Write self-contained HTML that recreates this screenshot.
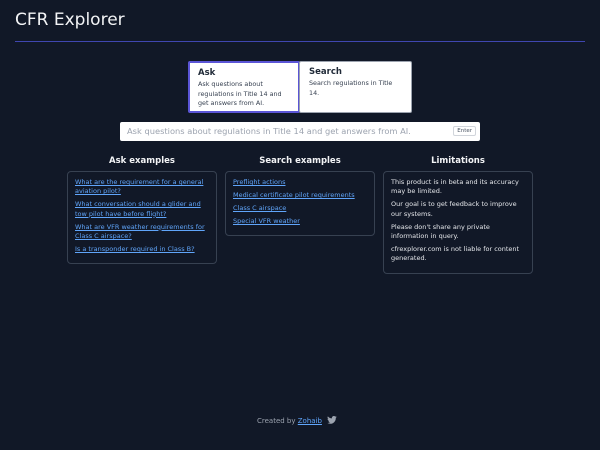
<!DOCTYPE html>
<html><head><style>
*{box-sizing:border-box;margin:0;padding:0}
body{width:600px;height:450px;background:#111827;font-family:"DejaVu Sans","Liberation Sans",sans-serif;color:#e5e7eb;position:relative;overflow:hidden}
h1{position:absolute;left:15px;top:10px;font-size:17px;font-weight:400;color:#f3f4f6}
.hr{position:absolute;left:15px;top:41px;width:570px;height:1px;background:#3f46b0}
.card{position:absolute;top:61px;height:52px;background:#fff;border-radius:2px;padding:5px 8px;color:#374151}
.card b{display:block;font-size:8.5px;color:#1f2937;margin-bottom:2px}
.card p{font-size:6.4px;line-height:9.5px}
.inp{position:absolute;left:120px;top:122px;width:360px;height:19px;background:#fff;border-radius:2px;font-size:8.3px;color:#9ca3af;padding:3.5px 7px}
.enter{position:absolute;right:4px;top:4px;border:1px solid #d1d5db;border-radius:2px;font-size:5.5px;color:#4b5563;padding:1px 3px}
h2{position:absolute;top:156px;font-size:8.5px;font-weight:700;color:#f3f4f6;text-align:center;width:150px}
.box{position:absolute;top:171px;width:150px;border:1px solid #374151;border-radius:4px;padding:6px 6px 3px 7px;font-size:6.5px;line-height:9.3px}
.box a{display:block;color:#60a5fa;text-decoration:underline;margin-bottom:3.8px}
.box p{color:#e5e7eb;margin-bottom:3.8px}
.foot{position:absolute;top:416px;left:257px;font-size:7px;color:#9ca3af}
.foot a{color:#60a5fa;text-decoration:underline}
</style></head><body>
<h1>CFR Explorer</h1>
<div class="hr"></div>
<div class="card" style="left:188px;width:112px;border:2px solid #5b55d6"><b>Ask</b><p>Ask questions about regulations in Title 14 and get answers from AI.</p></div>
<div class="card" style="left:299px;width:113px;border:1px solid #9ca3af;padding-left:9px"><b>Search</b><p>Search regulations in Title 14.</p></div>
<div class="inp">Ask questions about regulations in Title 14 and get answers from AI.<span class="enter">Enter</span></div>
<h2 style="left:67px">Ask examples</h2>
<h2 style="left:225px">Search examples</h2>
<h2 style="left:383px">Limitations</h2>
<div class="box" style="left:67px;height:93px"><a>What are the requirement for a general aviation pilot?</a><a>What conversation should a glider and tow pilot have before flight?</a><a>What are VFR weather requirements for Class C airspace?</a><a>Is a transponder required in Class B?</a></div>
<div class="box" style="left:225px;height:65px"><a>Preflight actions</a><a>Medical certificate pilot requirements</a><a>Class C airspace</a><a>Special VFR weather</a></div>
<div class="box" style="left:383px;height:103px"><p>This product is in beta and its accuracy may be limited.</p><p>Our goal is to get feedback to improve our systems.</p><p>Please don't share any private information in query.</p><p>cfrexplorer.com is not liable for content generated.</p></div>
<div class="foot">Created by <a>Zohaib</a> <svg width="10" height="8" viewBox="0 0 24 20" style="vertical-align:-1px;margin-left:3px"><path fill="#9ca3af" d="M24 2.4a10 10 0 0 1-2.8.8A5 5 0 0 0 23.3.4a10 10 0 0 1-3.1 1.2A4.9 4.9 0 0 0 11.8 6 14 14 0 0 1 1.7.9a4.9 4.9 0 0 0 1.5 6.6A5 5 0 0 1 1 6.9a4.9 4.9 0 0 0 3.9 4.9 5 5 0 0 1-2.2.1 4.9 4.9 0 0 0 4.6 3.4A9.9 9.9 0 0 1 0 17.3 14 14 0 0 0 7.5 19.5c9 0 14-7.5 14-14v-.6A10 10 0 0 0 24 2.4z"/></svg></div>
</body></html>
